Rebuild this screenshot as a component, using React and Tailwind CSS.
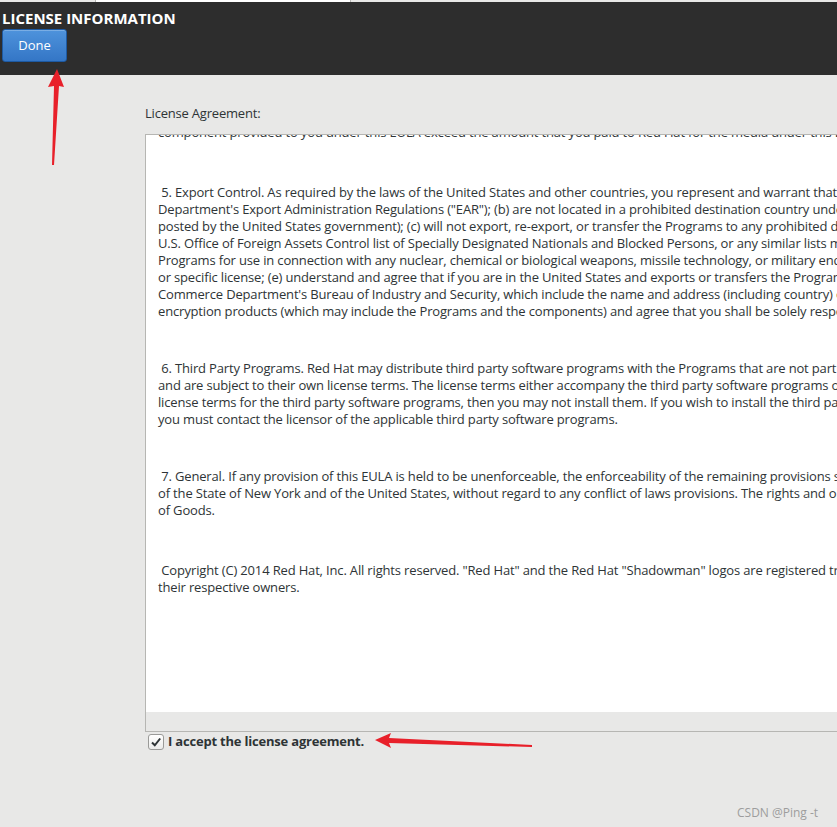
import React from "react";

const paragraphs = [
  [
    "component provided to you under this EULA exceed the amount that you paid to Red Hat for the media under this EULA.",
  ],
  [
    " 5. Export Control. As required by the laws of the United States and other countries, you represent and warrant that you: (a) understand that the Programs",
    "Department's Export Administration Regulations (\"EAR\"); (b) are not located in a prohibited destination country under the EAR or U.S. sanctions regulations",
    "posted by the United States government); (c) will not export, re-export, or transfer the Programs to any prohibited destination, entity, or individual",
    "U.S. Office of Foreign Assets Control list of Specially Designated Nationals and Blocked Persons, or any similar lists maintained by other countries",
    "Programs for use in connection with any nuclear, chemical or biological weapons, missile technology, or military end-uses, or for any other",
    "or specific license; (e) understand and agree that if you are in the United States and exports or transfers the Programs to eligible end users",
    "Commerce Department's Bureau of Industry and Security, which include the name and address (including country) of each transferee",
    "encryption products (which may include the Programs and the components) and agree that you shall be solely responsible for compliance",
  ],
  [
    " 6. Third Party Programs. Red Hat may distribute third party software programs with the Programs that are not part of the Programs",
    "and are subject to their own license terms. The license terms either accompany the third party software programs or, in some instances,",
    "license terms for the third party software programs, then you may not install them. If you wish to install the third party software programs",
    "you must contact the licensor of the applicable third party software programs.",
  ],
  [
    " 7. General. If any provision of this EULA is held to be unenforceable, the enforceability of the remaining provisions shall not be affected",
    "of the State of New York and of the United States, without regard to any conflict of laws provisions. The rights and obligations of the parties",
    "of Goods.",
  ],
  [
    " Copyright (C) 2014 Red Hat, Inc. All rights reserved. \"Red Hat\" and the Red Hat \"Shadowman\" logos are registered trademarks of Red Hat, Inc.",
    "their respective owners.",
  ],
];

const font = { fontFamily: "'Open Sans', 'DejaVu Sans', sans-serif" };

const Arrows = () => (
  <svg
    className="absolute left-0 top-0 pointer-events-none"
    width="837"
    height="827"
    viewBox="0 0 837 827"
  >
    <polygon points="57,69 64,87 59,86 54,165 52,165 54,86 48,87" fill="#e8202a" />
    <polygon points="375,740 391,733 389,738 532,745 532,747 389,743 391,748" fill="#e8202a" />
  </svg>
);

const App = () => {
  return (
    <div
      className="relative w-[837px] h-[827px] overflow-hidden bg-[#e8e8e7] text-[#2e3436]"
      style={font}
    >
      <div className="flex h-[2px]">
        <div className="w-[95px] bg-[#e8e8e7]" />
        <div className="w-px bg-[#b6b6b3]" />
        <div className="w-[254px] bg-white" />
        <div className="w-px bg-[#b6b6b3]" />
        <div className="flex-1 bg-[#e8e8e7]" />
      </div>

      <header className="h-[73px] bg-[#2d2d2d] px-[2px] pt-[6px]">
        <h1 className="text-[15px] font-bold leading-[20px] text-white">
          LICENSE INFORMATION
        </h1>
        <button className="mt-[1px] w-[65px] h-[33px] rounded-[3px] border border-[#1d5aa3] bg-gradient-to-b from-[#4e93dc] to-[#3476c6] text-[13px] text-white shadow-[inset_0_1px_0_rgba(255,255,255,0.25)]">
          Done
        </button>
      </header>

      <main className="pl-[145px] pt-[30px]">
        <p className="text-[13px] leading-[17px] mb-[12px] tracking-[-0.2px]">License Agreement:</p>

        <div className="w-[760px] h-[598px] border border-[#b6b6b3] bg-[#e8e8e7] flex flex-col">
          <div className="h-[577px] bg-white overflow-hidden pl-[12px] text-[13px] leading-[17px] tracking-[-0.16px] text-[#2e3436]">
            <div className="-mt-[11px] flex flex-col gap-[40px]">
              {paragraphs.map((lines, i) => (
                <div
                  key={i}
                  className={i === 0 ? "mb-[3px]" : i === 4 ? "mt-[3px]" : ""}
                >
                  {lines.map((line, j) => (
                    <div key={j} className="whitespace-pre">
                      {line}
                    </div>
                  ))}
                </div>
              ))}
            </div>
          </div>
        </div>

        <label className="ml-[3px] flex items-center gap-[4px] text-[13px] font-bold tracking-[-0.2px]">
          <span className="w-[16px] h-[16px] rounded-[3px] border border-[#9a9a98] bg-gradient-to-b from-white to-[#ebebea] flex items-center justify-center">
            <svg width="12" height="12" viewBox="0 0 12 12">
              <path d="M2 6.5 L4.8 9.3 L10.2 2.5" fill="none" stroke="#2e3436" strokeWidth="2" />
            </svg>
          </span>
          I accept the license agreement.
        </label>
      </main>

      <div className="absolute left-[737px] top-[804px] text-[12px] text-[#9d9d9d]">
        CSDN @Ping -t
      </div>

      <Arrows />
    </div>
  );
};

export default App;
